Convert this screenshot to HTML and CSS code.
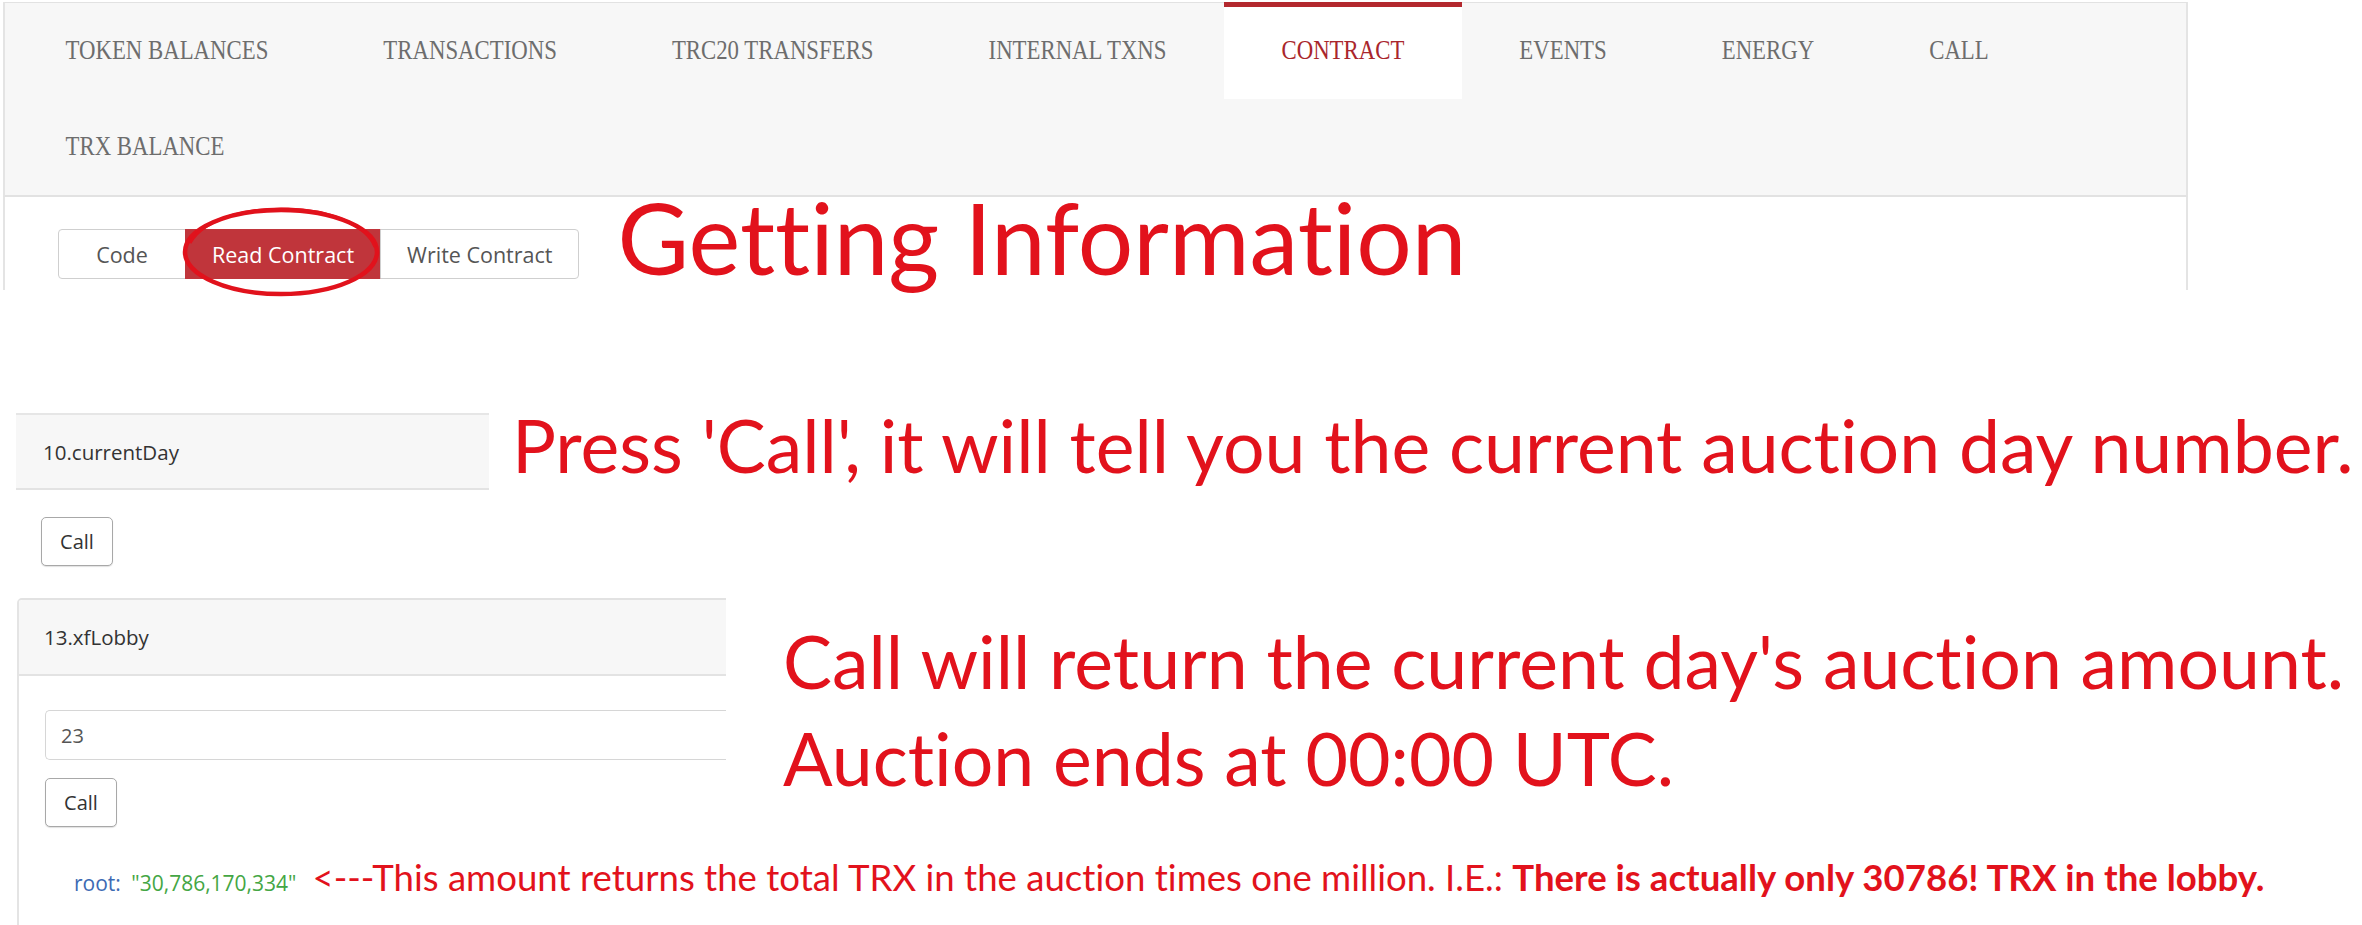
FILE: index.html
```html
<!DOCTYPE html>
<html lang="en">
<head>
<meta charset="utf-8">
<title>Read Contract</title>
<link rel="stylesheet" href="styles.css">
</head>
<body>
<div class="page">
  <section class="top">
    <nav class="tabbar">
      <div class="tab"><span class="tab-label">TOKEN BALANCES</span></div>
      <div class="tab"><span class="tab-label">TRANSACTIONS</span></div>
      <div class="tab"><span class="tab-label">TRC20 TRANSFERS</span></div>
      <div class="tab"><span class="tab-label">INTERNAL TXNS</span></div>
      <div class="tab active"><span class="tab-label">CONTRACT</span></div>
      <div class="tab"><span class="tab-label">EVENTS</span></div>
      <div class="tab"><span class="tab-label">ENERGY</span></div>
      <div class="tab"><span class="tab-label">CALL</span></div>
      <div class="tab"><span class="tab-label">TRX BALANCE</span></div>
    </nav>
    <div class="contract-body">
      <div class="btn-group">
        <button class="seg">Code</button>
        <button class="seg on">Read Contract</button>
        <button class="seg">Write Contract</button>
        <svg class="circle" width="210" height="96" viewBox="0 0 210 96" aria-hidden="true">
          <ellipse cx="105" cy="49" rx="96" ry="42" fill="none" stroke="#e1121c" stroke-width="4.5"/>
          <path d="M14 40 C 30 12, 80 5, 112 6 C 150 7, 190 20, 199 44" fill="none" stroke="#e1121c" stroke-width="3"/>
        </svg>
      </div>
      <h1 class="note note-xl">Getting Information</h1>
    </div>
  </section>

  <section class="read">
    <div class="row row-a">
      <div class="fn-head fn-head-a">10.currentDay</div>
      <p class="note note-l note-press">Press 'Call', it will tell you the current auction day number.</p>
    </div>
    <button class="call call-a">Call</button>

    <div class="row row-b">
      <div class="card">
        <div class="fn-head">13.xfLobby</div>
        <div class="card-body">
          <div class="param">23</div>
          <button class="call call-b">Call</button>
          <div class="result"><span class="key">root:</span> <span class="val">"30,786,170,334"</span><span class="note note-s">&lt;---This amount returns the total TRX in the auction times one million. I.E.: <b>There is actually only 30786! TRX in the lobby.</b></span></div>
        </div>
      </div>
      <p class="note note-l note-call">Call will return the current day's auction amount.<br>Auction ends at 00:00 UTC.</p>
    </div>
  </section>
</div>
</body>
</html>
```

FILE: styles.css
```css
* { box-sizing: border-box; }

html, body {
  margin: 0;
  padding: 0;
  background: #ffffff;
}

body {
  width: 2362px;
  height: 925px;
  overflow: hidden;
  font-family: "Open Sans", "Noto Sans", sans-serif;
}

/* ---------- top: tabs + contract sub tabs ---------- */
.top {
  margin: 2px 0 0 3px;
  width: 2185px;
}

.tabbar {
  display: flex;
  flex-wrap: wrap;
  background: #f7f7f7;
  border-top: 1px solid #e2e2e2;
  border-left: 2px solid #e4e4e4;
  border-right: 2px solid #e4e4e4;
  border-bottom: 2px solid #e2e2e2;
  padding-left: 3px;
}

.tab {
  height: 96px;
  padding: 0 57.5px;
  display: flex;
  align-items: center;
  font-family: "Liberation Serif", "Times New Roman", serif;
  font-size: 22.8px;
  color: #6d6d6d;
  white-space: nowrap;
}

.tab-label {
  display: inline-block;
  transform: scaleY(1.16);
}

.tab.active {
  background: #ffffff;
  border-top: 5px solid #b3282e;
  margin-top: -1px;
  height: 97px;
  padding-bottom: 4px;
  color: #a9262c;
}

.contract-body {
  height: 93px;
  border-left: 2px solid #e4e4e4;
  border-right: 2px solid #e4e4e4;
  display: flex;
  align-items: flex-start;
  padding: 32px 0 0 53px;
}

.btn-group {
  position: relative;
  display: flex;
  height: 50px;
}

.seg {
  font-family: "Open Sans", "Noto Sans", sans-serif;
  font-size: 21.5px;
  color: #555555;
  background: #ffffff;
  border: 1px solid #cfcfcf;
  min-width: 128px;
  height: 50px;
  padding: 0 26px;
  margin: 0 0 0 -1px;
  border-radius: 0;
  white-space: nowrap;
}

.seg:first-child {
  margin-left: 0;
  border-radius: 4px 0 0 4px;
}

.seg:nth-child(3) {
  border-radius: 0 4px 4px 0;
}

.seg.on {
  background: #c0353b;
  border-color: #c0353b;
  color: #ffffff;
}

.circle {
  position: absolute;
  left: 118px;
  top: -26px;
  pointer-events: none;
}

/* ---------- red annotations ---------- */
.note {
  font-family: Lato, "Open Sans", sans-serif;
  font-weight: 400;
  font-variant-ligatures: none;
  color: #e2121c;
  margin: 0;
  white-space: nowrap;
}

.note-xl {
  font-size: 98px;
  line-height: 96px;
  margin: -40px 0 0 38px;
}

.note-l {
  font-size: 73.4px;
}

.note-press {
  line-height: 80px;
  margin: -8px 0 0 23px;
}

.note-call {
  line-height: 97px;
  margin: 15px 0 0 57px;
}

.note-s {
  font-size: 36.6px;
  line-height: 30px;
  margin-left: 16px;
}

.note-s b {
  font-weight: 700;
}

/* ---------- read contract functions ---------- */
.read {
  margin-top: 123px;
}

.row {
  display: flex;
  align-items: flex-start;
}

.row-a {
  margin-left: 16px;
}

.fn-head {
  background: #f7f7f7;
  border-top: 2px solid #e6e6e6;
  border-bottom: 2px solid #e3e3e3;
  height: 77px;
  display: flex;
  align-items: center;
  padding-left: 27px;
  font-size: 20.5px;
  color: #333333;
}

.fn-head-a {
  width: 473px;
}

.call {
  display: block;
  width: 72px;
  height: 49px;
  padding: 0;
  border: 1px solid #a8a8a8;
  border-radius: 5px;
  background: #ffffff;
  font-family: "Open Sans", "Noto Sans", sans-serif;
  font-size: 20px;
  color: #333333;
  box-shadow: 0 1px 1px rgba(0, 0, 0, 0.12);
}

.call-a {
  margin: 27px 0 0 41px;
}

.row-b {
  margin: 32px 0 0 17px;
}

.card {
  width: 709px;
  height: 330px;
  border-left: 2px solid #e4e4e4;
  border-top: 2px solid #e2e2e2;
  border-top-left-radius: 5px;
}

.card .fn-head {
  border-top: none;
  height: 76px;
  padding-left: 25px;
  border-top-left-radius: 4px;
}

.card-body {
  padding: 34px 0 0 26px;
}

.param {
  height: 50px;
  border: 1px solid #d6d6d6;
  border-right: none;
  border-radius: 5px 0 0 5px;
  display: flex;
  align-items: center;
  padding-left: 15px;
  font-size: 20px;
  color: #555555;
}

.call-b {
  margin-top: 18px;
}

.result {
  margin-top: 35px;
  padding-left: 29px;
  white-space: nowrap;
  font-size: 21px;
  line-height: 30px;
}

.key {
  color: #3d6ab3;
}

.val {
  color: #44a644;
  margin-left: 5px;
}
```
